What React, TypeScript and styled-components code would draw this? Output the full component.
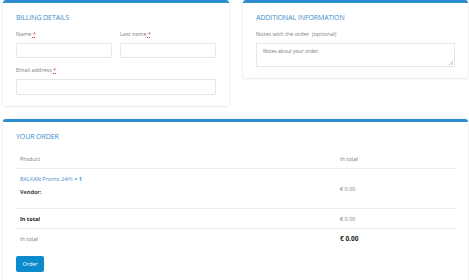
import React from "react";
import styled, { createGlobalStyle } from "styled-components";

const Global = createGlobalStyle`
  html, body { margin: 0; padding: 0; background: #fff; }
  body { font-family: "Open Sans", "DejaVu Sans", sans-serif; color: #555; }
  * { box-sizing: border-box; }
`;

const Page = styled.div`
  padding: 0 1px 0 3px;
  display: flex;
  flex-direction: column;
  gap: 13px;
`;

const TopRow = styled.div`
  display: grid;
  grid-template-columns: 226px 225px;
  column-gap: 14px;
  align-items: start;
`;

const Card = styled.section<{ $pb?: number }>`
  background: #fff;
  border-top: 3px solid #2a8ecf;
  border-radius: 3px;
  box-shadow: 0 0 3px rgba(0, 0, 0, 0.09), 0 1px 2px rgba(0, 0, 0, 0.05);
  padding: 9px 13px ${(p) => p.$pb ?? 11}px;
`;

const Heading = styled.h2`
  margin: 0;
  font-weight: 400;
  font-size: 7px;
  line-height: 11px;
  letter-spacing: -0.1px;
  color: #3a8dca;
  text-transform: uppercase;
`;

const FieldRow = styled.div`
  display: grid;
  grid-template-columns: 1fr 1fr;
  column-gap: 8px;
`;

const Field = styled.div<{ $mt: number }>`
  display: flex;
  flex-direction: column;
  margin-top: ${(p) => p.$mt}px;
`;

const Label = styled.label`
  font-size: 5.5px;
  line-height: 8px;
  color: #808080;
  margin-bottom: 5px;
`;

const Req = styled.span`
  color: #d33;
  text-decoration: underline dotted;
`;

const Input = styled.div<{ $h: number }>`
  height: ${(p) => p.$h}px;
  border: 1px solid #e6e6e6;
  border-radius: 1px;
  background: #fff;
`;

const TextArea = styled.div`
  position: relative;
  height: 24px;
  border: 1px solid #e6e6e6;
  padding: 4px 6px;
  font-size: 5px;
  line-height: 7px;
  color: #777;
`;

const Grip = styled.svg`
  position: absolute;
  right: 1px;
  bottom: 1px;
`;

const Table = styled.div`
  margin-top: 7px;
  display: grid;
  grid-template-columns: 320px 120px;
  width: 440px;
`;

const Cell = styled.div<{ $h: number; $line?: boolean; $bold?: boolean; $dark?: boolean; $size?: number }>`
  height: ${(p) => p.$h}px;
  display: flex;
  flex-direction: column;
  justify-content: center;
  padding-left: 4px;
  font-size: ${(p) => p.$size ?? 5.5}px;
  line-height: 8px;
  font-weight: ${(p) => (p.$bold ? 700 : 400)};
  color: ${(p) => (p.$dark ? "#222" : "#777")};
  border-bottom: ${(p) => (p.$line ? "1px solid #ececec" : "none")};
`;

const ProductCell = styled(Cell)`
  justify-content: flex-start;
  padding-top: 6px;
  gap: 5px;
`;

const ProductName = styled.span`
  color: #4a8ecb;
`;

const Qty = styled.strong`
  color: #4a8ecb;
  font-weight: 700;
`;

const Vendor = styled.span`
  font-weight: 700;
  color: #444;
`;

const Button = styled.button`
  margin-top: 5px;
  width: 28px;
  height: 16px;
  border: none;
  border-radius: 2px;
  background: #0b8bcb;
  color: #fff;
  font-family: inherit;
  font-size: 5.5px;
  padding: 0;
  cursor: pointer;
`;

export default function App() {
  return (
    <>
      <Global />
      <Page>
        <TopRow>
          <Card $pb={11}>
            <Heading>Billing details</Heading>
            <FieldRow>
              <Field $mt={7}>
                <Label>
                  Name{" "}<Req>*</Req>
                </Label>
                <Input $h={15} />
              </Field>
              <Field $mt={7}>
                <Label>
                  Last name{" "}<Req>*</Req>
                </Label>
                <Input $h={15} />
              </Field>
            </FieldRow>
            <Field $mt={8}>
              <Label>
                Email address{" "}<Req>*</Req>
              </Label>
              <Input $h={16} />
            </Field>
          </Card>
          <Card $pb={11}>
            <Heading>Additional information</Heading>
            <Field $mt={7}>
              <Label>Notes with the order&nbsp; (optional)</Label>
              <TextArea>
                Notes about your order.
                <Grip width="4" height="4" viewBox="0 0 4 4">
                  <path d="M0 4 L4 0 M2 4 L4 2" stroke="#999" strokeWidth="0.6" />
                </Grip>
              </TextArea>
            </Field>
          </Card>
        </TopRow>
        <Card $pb={11}>
          <Heading>Your order</Heading>
          <Table>
            <Cell $h={20} $line>Product</Cell>
            <Cell $h={20} $line>In total</Cell>
            <ProductCell $h={40} $line>
              <span>
                <ProductName>BALKAN Promo 24/h</ProductName>{"  "}<Qty>× 1</Qty>
              </span>
              <Vendor>Vendor:</Vendor>
            </ProductCell>
            <Cell $h={40} $line>€ 0.00</Cell>
            <Cell $h={20} $line $bold $dark>In total</Cell>
            <Cell $h={20} $line>€ 0.00</Cell>
            <Cell $h={20}>In total</Cell>
            <Cell $h={20} $bold $dark $size={6.5}>€ 0.00</Cell>
          </Table>
          <Button>Order</Button>
        </Card>
      </Page>
    </>
  );
}
